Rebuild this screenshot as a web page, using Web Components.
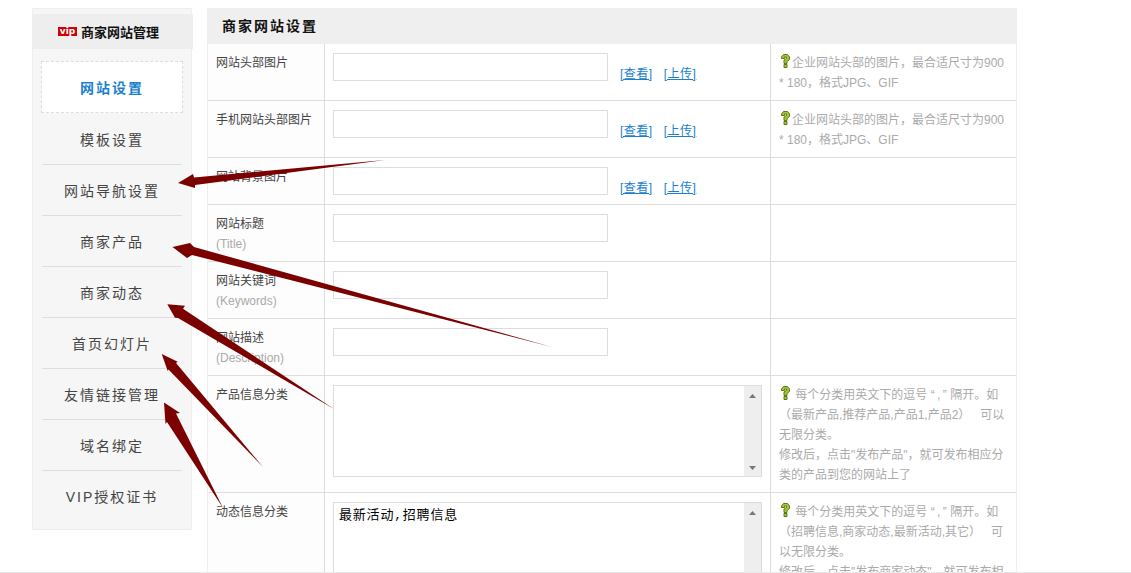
<!DOCTYPE html>
<html><head><meta charset="utf-8">
<style>
html,body{margin:0;padding:0;background:#fff;overflow:hidden;height:573px}
body{font-family:"Liberation Sans","Noto Sans CJK SC",sans-serif}
</style></head>
<body>
<template id="t-page"><style>
:host{display:flex;position:relative;gap:15px;box-sizing:border-box;height:573px;padding:8px 0 0 32px;border-bottom:1px solid #e8e8e8;overflow:hidden}
</style><slot></slot></template>

<template id="t-side"><style>
:host{display:block;flex:none;box-sizing:border-box;width:160px;height:522px;background:#f6f6f6;border:1px solid #eee;padding-top:5px}
.head{display:flex;align-items:center;justify-content:center;gap:4px;height:35px;margin-right:-2px;background:#eee;font-size:13px;font-weight:bold;color:#111;padding:0 9px 1px 0;box-sizing:border-box}
.vip{width:19px;height:9px;background:#d40000;color:#fff;font:bold 9px/8px "DejaVu Sans",sans-serif;text-align:center}
.list{padding:12px 8px 0}
</style><div class="head"><span class="vip">vip</span><span>商家网站管理</span></div><div class="list"><slot></slot></div></template>

<template id="t-nav"><style>
:host{display:flex;align-items:center;justify-content:center;box-sizing:border-box;height:51px;margin:0 1px;border-bottom:1px solid #ddd;font-size:14px;letter-spacing:2px;color:#444}
:host([active]){height:52px;margin:0 0 1px;color:#1a7fce;font-weight:bold;background:#fff;border:1px dashed #ddd}
:host([last]){border-bottom:0;padding-bottom:2px}
</style><slot></slot></template>

<template id="t-main"><style>
:host{display:block;flex:none;width:810px}
.title{height:36px;background:#efefef;box-sizing:border-box;padding-left:15px;font-size:14px;font-weight:bold;letter-spacing:2px;line-height:36px;color:#111}
.body{border:1px solid #eee;border-width:0 1px}
</style><div class="title">商家网站设置</div><div class="body"><slot></slot></div></template>

<template id="t-row"><style>
:host{display:grid;grid-template-columns:117px 446px 245px;box-sizing:border-box;border-bottom:1px solid #ddd;font-size:12px;line-height:20px}
.a{background:#fdfdfd;border-right:1px solid #ddd;padding:9px 0 0 8px;color:#444;box-sizing:content-box;width:108px}
.b{padding:9px 0 0 8px;border-right:1px solid #ddd;display:flex;align-items:flex-start}
.c{padding:9px 8px 0;color:#aaa}
::slotted([slot=sub]){display:block;color:#aaa}
</style><div class="a"><slot name="label"></slot><slot name="sub"></slot></div><div class="b"><slot name="field"></slot></div><div class="c"><slot name="hint"></slot></div></template>

<template id="t-input"><style>
:host{display:block;flex:none;width:275px;height:28px;box-sizing:border-box;border:1px solid #ddd;background:#fff}
</style></template>

<template id="t-links"><style>
:host{display:flex;gap:11px;margin:11px 0 0 12px;font-size:12px;line-height:20px;letter-spacing:.5px}
a{color:#1a7fce;text-decoration:underline}
</style><a>[查看]</a><a>[上传]</a></template>

<template id="t-area"><style>
:host{display:flex;flex:none;width:429px;height:92px;box-sizing:border-box;border:1px solid #ddd;background:#fff}
.txt{flex:1;padding:3px 5px;font:13px/20px "Liberation Mono","Noto Sans CJK SC",monospace;letter-spacing:.8px;color:#000}
.bar{width:17px;flex:none;background:#eee;display:flex;flex-direction:column;justify-content:space-between;align-items:center;padding:8px 0 6px;box-sizing:border-box}
svg{display:block}
</style><div class="txt"><slot></slot></div><div class="bar"><svg width="7" height="4"><path d="M3.5 0 7 4H0z" fill="#777"/></svg><svg width="7" height="4"><path d="M0 0h7L3.5 4z" fill="#777"/></svg></div></template>

<template id="t-tip"><style>
:host{display:inline-block;width:13px;height:14px;vertical-align:-1px}
svg{display:block;margin-left:2px}
</style><svg width="9" height="14" viewBox="0 0 9 14"><path d="M.5 3 2.500.5h4L8.500 3v2.500L6 7.500v2H3V6l2.500-1.500V3h-2v1.500h-3z" fill="#a4c639" stroke="#5c7a12" stroke-width="1"/><path d="M3 10.500h3v3H3z" fill="#a4c639" stroke="#5c7a12"/></svg></template>

<template id="t-arrows"><style>
:host{position:absolute;left:0;top:0;width:1131px;height:573px;pointer-events:none}
svg{display:block}
</style><svg width="1131" height="573" fill="#7b0000">
<polygon points="178,183 193,174 194,177.500 385,160 195,185 195,188"/>
<polygon points="172.500,247 190,243 194,247 552,347 192,255 187,258"/>
<polygon points="167.300,304.300 185,305.700 183,308.800 334,409 178,318 175,317.700"/>
<polygon points="161.700,354 177.700,361.700 176,363 263,467 168.500,369.500 167.700,371"/>
<polygon points="164,402.500 180,413 176,413.500 223,508 167,422 165.500,424"/>
</svg></template>

<shop-page>
<shop-side>
<shop-nav active>网站设置</shop-nav>
<shop-nav>模板设置</shop-nav>
<shop-nav>网站导航设置</shop-nav>
<shop-nav>商家产品</shop-nav>
<shop-nav>商家动态</shop-nav>
<shop-nav>首页幻灯片</shop-nav>
<shop-nav>友情链接管理</shop-nav>
<shop-nav>域名绑定</shop-nav>
<shop-nav last>VIP授权证书</shop-nav>
</shop-side>
<shop-main>
<shop-row style="height:57px"><span slot="label">网站头部图片</span><shop-input slot="field"></shop-input><shop-links slot="field"></shop-links><span slot="hint"><shop-tip></shop-tip>企业网站头部的图片，最合适尺寸为900 * 180，格式JPG、GIF</span></shop-row>
<shop-row style="height:57px"><span slot="label">手机网站头部图片</span><shop-input slot="field"></shop-input><shop-links slot="field"></shop-links><span slot="hint"><shop-tip></shop-tip>企业网站头部的图片，最合适尺寸为900 * 180，格式JPG、GIF</span></shop-row>
<shop-row style="height:47px"><span slot="label">网站背景图片</span><shop-input slot="field"></shop-input><shop-links slot="field"></shop-links></shop-row>
<shop-row style="height:57px"><span slot="label">网站标题</span><span slot="sub">(Title)</span><shop-input slot="field"></shop-input></shop-row>
<shop-row style="height:57px"><span slot="label">网站关键词</span><span slot="sub">(Keywords)</span><shop-input slot="field"></shop-input></shop-row>
<shop-row style="height:57px"><span slot="label">网站描述</span><span slot="sub">(Description)</span><shop-input slot="field"></shop-input></shop-row>
<shop-row style="height:117px"><span slot="label">产品信息分类</span><shop-area slot="field"></shop-area><span slot="hint"><shop-tip></shop-tip> 每个分类用英文下的逗号 “&#8201;,&#8201;” 隔开。如（最新产品,推荐产品,产品1,产品2）&nbsp;&nbsp; 可以无限分类。<br>修改后，点击"发布产品"，就可发布相应分类的产品到您的网站上了</span></shop-row>
<shop-row style="height:117px"><span slot="label">动态信息分类</span><shop-area slot="field">最新活动,招聘信息</shop-area><span slot="hint"><shop-tip></shop-tip> 每个分类用英文下的逗号 “&#8201;,&#8201;” 隔开。如（招聘信息,商家动态,最新活动,其它）&nbsp;&nbsp; 可以无限分类。<br>修改后，点击"发布商家动态"，就可发布相应分类的动态到您的网站上了</span></shop-row>
</shop-main>
<shop-arrows></shop-arrows>
</shop-page>
<script>
[['shop-page','t-page'],['shop-side','t-side'],['shop-nav','t-nav'],['shop-main','t-main'],['shop-row','t-row'],['shop-input','t-input'],['shop-links','t-links'],['shop-area','t-area'],['shop-tip','t-tip'],['shop-arrows','t-arrows']].forEach(([n,t])=>{
customElements.define(n,class extends HTMLElement{constructor(){super();this.attachShadow({mode:'open'}).appendChild(document.getElementById(t).content.cloneNode(true));}});
});
</script>
</body></html>
